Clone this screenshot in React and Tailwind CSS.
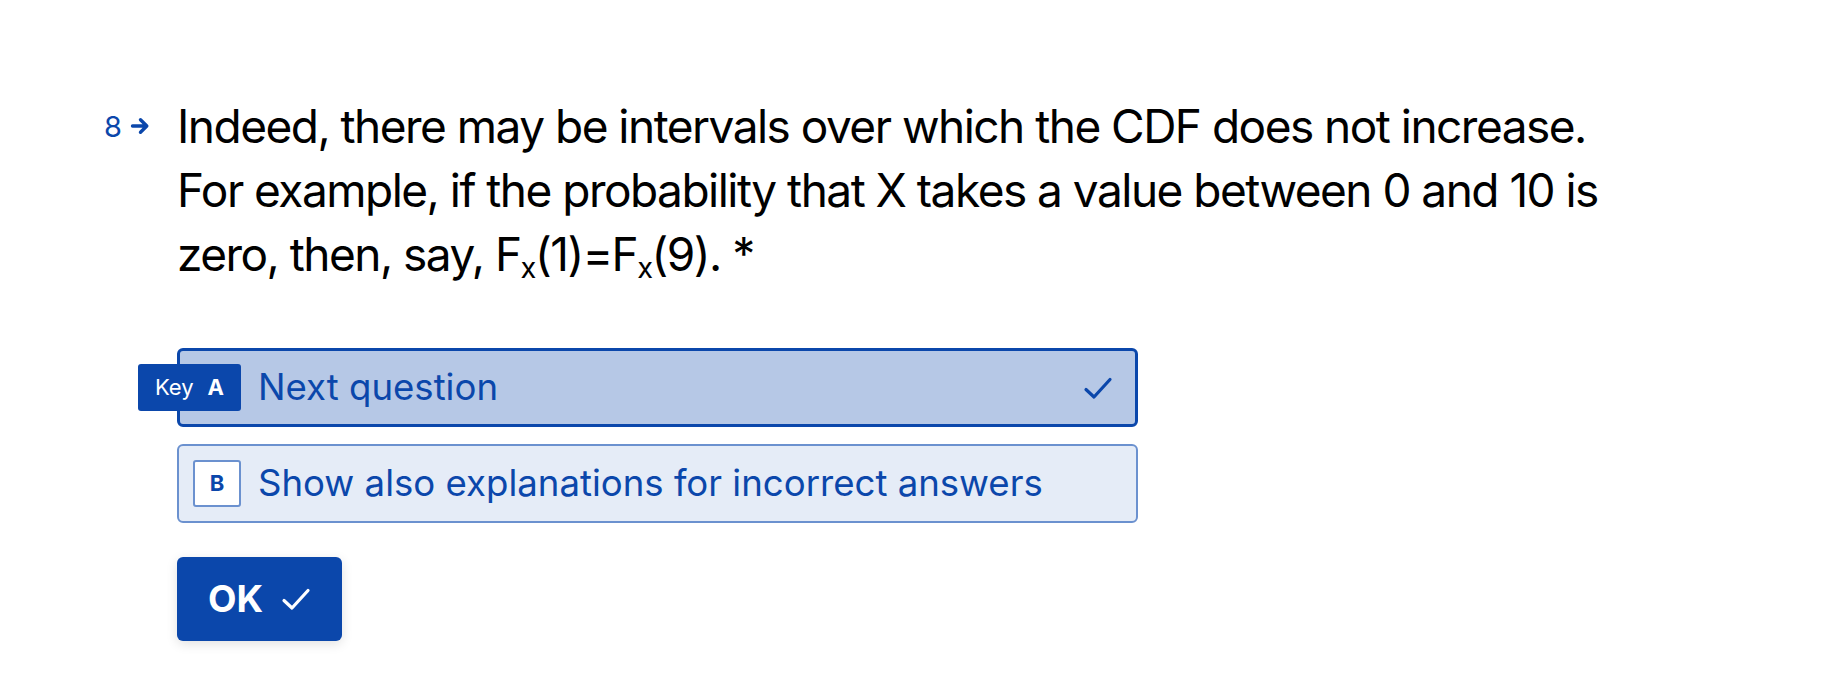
import React from "react";

function Check({ className }) {
  return (
    <svg viewBox="0 0 30 24" className={className} fill="none" stroke="currentColor" strokeWidth="3.2" strokeLinecap="round" strokeLinejoin="round">
      <path d="M3 13.5 L11 21 L27 3.5" />
    </svg>
  );
}

export default function App() {
  return (
    <div className="w-[1842px] h-[686px] bg-white text-black [font-family:Inter,'Noto_Sans',sans-serif]">
      <div className="flex pt-[94px] pl-[104px]">
        <div className="w-[73px] flex items-center h-[64px] gap-[8px] text-[#0b47ab]">
          <span className="text-[29px] leading-none">8</span>
          <svg viewBox="0 0 20 20" className="w-[20px] h-[20px]" fill="none" stroke="currentColor" strokeWidth="3.4" strokeLinecap="round" strokeLinejoin="round">
            <path d="M2.5 10 H16.5 M10.5 3.8 L16.8 10 L10.5 16.2" />
          </svg>
        </div>
        <div className="flex flex-col">
          <p className="text-[46px] leading-[64px] tracking-[-0.033em] w-[1460px]">
            Indeed, there may be intervals over which the CDF does not increase. For example, if the probability that X takes a value between 0 and 10 is zero, then, say, F<span className="relative top-[7px] text-[29px] leading-none">x</span>(1)=F<span className="relative top-[7px] text-[29px] leading-none">x</span>(9). *
          </p>
          <div className="mt-[62px] flex flex-col gap-[17px] w-[961px]">
            <div className="relative h-[79px] rounded-[6px] border-[3px] border-[#0b47ab] bg-[#b6c8e6] flex items-center pl-[78px] pr-[22px] text-[#0b47ab]">
              <div className="absolute left-[-42px] top-[13px] h-[47px] w-[103px] rounded-[3px] bg-[#0b47ab] text-white flex items-center justify-center gap-[14px]">
                <span className="text-[22px]">Key</span>
                <span className="text-[22px] font-bold">A</span>
              </div>
              <span className="text-[36.6px] flex-1">Next question</span>
              <Check className="w-[30px] h-[24px]" />
            </div>
            <div className="relative h-[79px] rounded-[6px] border-[2px] border-[#6b91cf] bg-[#e5ecf7] flex items-center pl-[14px] text-[#0b47ab]">
              <div className="h-[47px] w-[48px] rounded-[3px] border-[2px] border-[#6b91cf] bg-white flex items-center justify-center">
                <span className="text-[22px] font-bold">B</span>
              </div>
              <span className="ml-[17px] text-[36.6px]">Show also explanations for incorrect answers</span>
            </div>
          </div>
          <div className="mt-[34px]">
            <button className="h-[84px] w-[165px] rounded-[6px] bg-[#0b47ab] text-white flex items-center justify-center gap-[18px] shadow-[0_3px_12px_rgba(0,0,0,0.12)]">
              <span className="text-[37px] font-bold">OK</span>
              <Check className="w-[30px] h-[24px]" />
            </button>
          </div>
        </div>
      </div>
    </div>
  );
}
